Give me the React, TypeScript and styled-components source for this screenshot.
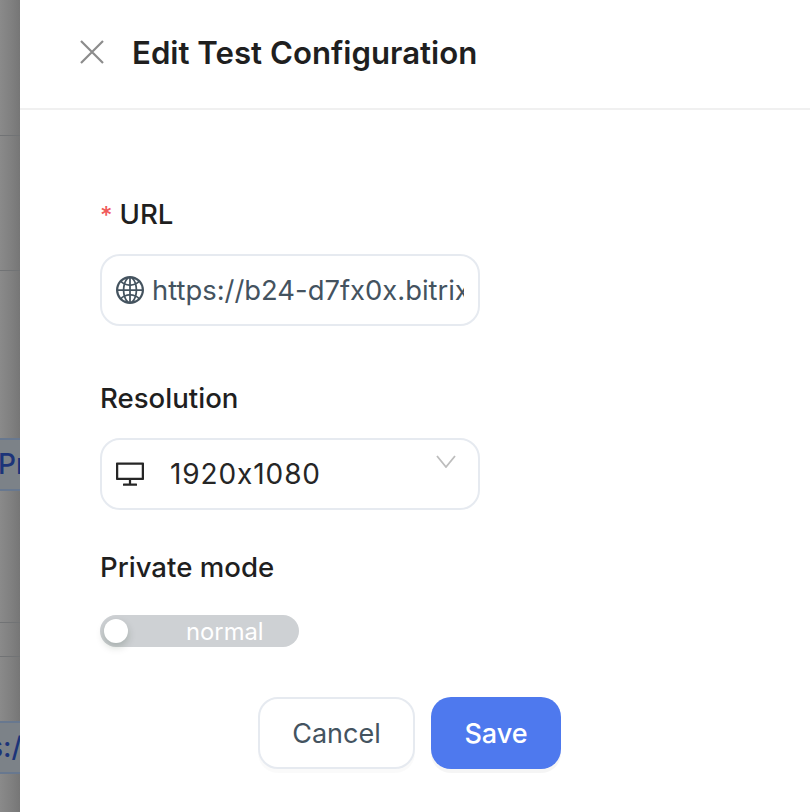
import React from 'react';
import styled, { createGlobalStyle } from 'styled-components';
import { AiOutlineGlobal, AiOutlineDesktop } from 'react-icons/ai';

const GlobalStyle = createGlobalStyle`
	html, body {
		margin: 0;
		padding: 0;
		background: #ffffff;
	}
	* {
		box-sizing: border-box;
	}
`;

function App() {
	return (
		<Page>
			<GlobalStyle />
			<Backdrop>
				<BackRow $height={136} />
				<BackRow $height={135} />
				<BackTagSlot $height={220}>
					<BackTag>Pr</BackTag>
				</BackTagSlot>
				<BackRow $height={132} />
				<BackRow $height={34} />
				<BackTagSlot $height={117}>
					<BackTag $indent={-12}>s:/</BackTag>
				</BackTagSlot>
			</Backdrop>
			<Drawer>
				<Header>
					<CloseIcon viewBox="0 0 24 24">
						<path d="M1 1 L23 23 M23 1 L1 23" />
					</CloseIcon>
					<Title>Edit Test Configuration</Title>
				</Header>
				<Form>
					<Label $top={91}>
						<Required>*</Required>URL
					</Label>
					<Field>
						<FieldIcon><AiOutlineGlobal /></FieldIcon>
						<UrlText>https://b24-d7fx0x.bitrix24.com/</UrlText>
					</Field>
					<Label $top={59}>Resolution</Label>
					<Field>
						<FieldIcon $dark><AiOutlineDesktop /></FieldIcon>
						<SelectText>1920x1080</SelectText>
						<Chevron viewBox="0 0 20 13">
							<path d="M1 1 L10 12 L19 1" />
						</Chevron>
					</Field>
					<Label $top={44}>Private mode</Label>
					<Switch>
						<Knob />
						<SwitchText>normal</SwitchText>
					</Switch>
					<Actions>
						<CancelButton>Cancel</CancelButton>
						<SaveButton>Save</SaveButton>
					</Actions>
				</Form>
			</Drawer>
		</Page>
	);
}

export default App;

const Page = styled.div`
	display: flex;
	width: 810px;
	height: 812px;
	overflow: hidden;
	font-family: Inter, "Liberation Sans", sans-serif;
	font-feature-settings: "calt" 0;
`;

const Backdrop = styled.div`
	display: flex;
	flex-direction: column;
	width: 20px;
	flex-shrink: 0;
	overflow: hidden;
	background: linear-gradient(90deg, #8a8a8a 0%, #7f7f7f 60%, #767676 100%);
`;

const BackRow = styled.div<{ $height: number }>`
	height: ${(p) => p.$height}px;
	flex-shrink: 0;
	border-bottom: 1px solid #717375;
`;

const BackTagSlot = styled.div<{ $height: number }>`
	display: flex;
	align-items: flex-end;
	height: ${(p) => p.$height}px;
	flex-shrink: 0;
`;

const BackTag = styled.div<{ $indent?: number }>`
	width: 20px;
	height: 53px;
	flex-shrink: 0;
	overflow: hidden;
	background: #7c8288;
	border-top: 2px solid #68788f;
	border-bottom: 2px solid #68788f;
	color: #1c3479;
	font-size: 28px;
	font-weight: 500;
	line-height: 49px;
	text-indent: ${(p) => p.$indent ?? -2}px;
	white-space: nowrap;
`;

const Drawer = styled.div`
	display: flex;
	flex-direction: column;
	flex: 1;
	background: #ffffff;
`;

const Header = styled.div`
	display: flex;
	align-items: center;
	gap: 28px;
	height: 110px;
	padding: 0 0 4px 60px;
	border-bottom: 2px solid #f0f0f0;
`;

const CloseIcon = styled.svg`
	width: 24px;
	height: 24px;
	flex-shrink: 0;
	fill: none;
	stroke: #8c8c8c;
	stroke-width: 2.2;
`;

const Title = styled.div`
	padding-top: 2px;
	font-size: 31.2px;
	font-weight: 600;
	color: #1f1f1f;
	white-space: nowrap;
`;

const Form = styled.div`
	display: flex;
	flex-direction: column;
	padding-left: 80px;
`;

const Label = styled.div<{ $top: number }>`
	margin: ${(p) => p.$top}px 0 25px;
	height: 28px;
	line-height: 26px;
	font-size: 27.6px;
	font-weight: 500;
	color: #1f1f1f;
`;

const Required = styled.span`
	margin-right: 7px;
	color: #f05a5a;
	font-size: 24px;
`;

const Field = styled.div`
	display: flex;
	align-items: center;
	position: relative;
	width: 380px;
	height: 72px;
	padding: 0 14px 0 12px;
	border: 2px solid #e6eaf0;
	border-radius: 20px;
	background: #ffffff;
`;

const FieldIcon = styled.span<{ $dark?: boolean }>`
	display: flex;
	flex-shrink: 0;
	font-size: 32px;
	color: ${(p) => (p.$dark ? '#262626' : '#44535f')};
`;

const UrlText = styled.div`
	margin-left: 6px;
	overflow: hidden;
	white-space: nowrap;
	font-size: 27.4px;
	color: #44535f;
`;

const SelectText = styled.div`
	margin-left: 24px;
	font-size: 28px;
	letter-spacing: 0.9px;
	color: #262626;
	white-space: nowrap;
`;

const Chevron = styled.svg`
	position: absolute;
	right: 22px;
	top: 15px;
	width: 20px;
	height: 13px;
	fill: none;
	stroke: #bdbdbd;
	stroke-width: 1.8;
`;

const Switch = styled.div`
	display: flex;
	align-items: center;
	width: 199px;
	height: 32px;
	margin-top: 8px;
	padding-left: 4px;
	border-radius: 16px;
	background: #ced1d4;
`;

const Knob = styled.span`
	width: 24px;
	height: 24px;
	flex-shrink: 0;
	border-radius: 50%;
	background: #ffffff;
	box-shadow: 0 4px 8px rgba(0, 35, 11, 0.2);
`;

const SwitchText = styled.span`
	margin-left: 58px;
	font-size: 23.8px;
	color: #ffffff;
`;

const Actions = styled.div`
	display: flex;
	gap: 16px;
	margin-top: 50px;
	padding-left: 158px;
`;

const CancelButton = styled.button`
	width: 157px;
	height: 72px;
	border: 2px solid #e6eaf0;
	border-radius: 20px;
	background: #ffffff;
	box-shadow: 0 4px 0 rgba(0, 0, 0, 0.02);
	font-family: inherit;
	font-feature-settings: inherit;
	font-size: 27px;
	color: #44535f;
`;

const SaveButton = styled.button`
	width: 130px;
	height: 72px;
	border: none;
	border-radius: 20px;
	background: #4e79ee;
	box-shadow: 0 4px 0 rgba(0, 0, 0, 0.04);
	font-family: inherit;
	font-feature-settings: inherit;
	font-size: 27px;
	font-weight: 500;
	color: #ffffff;
`;
